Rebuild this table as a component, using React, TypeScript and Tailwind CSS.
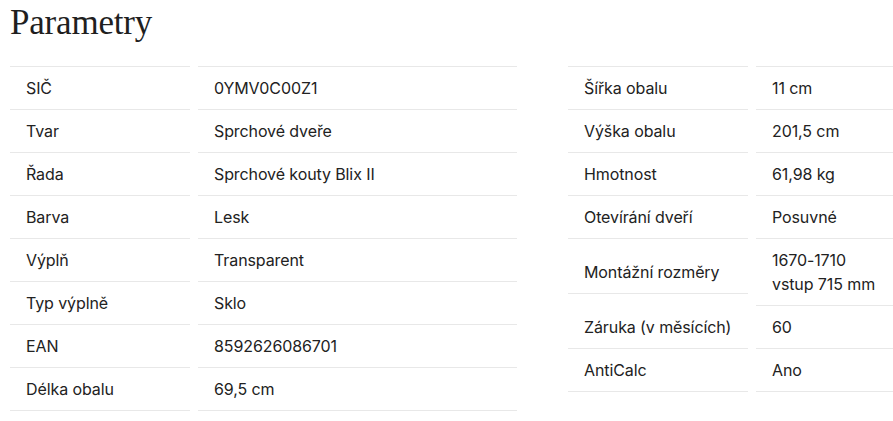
const LEFT: [string, string[]][] = [
  ['SIČ', ['0YMV0C00Z1']],
  ['Tvar', ['Sprchové dveře']],
  ['Řada', ['Sprchové kouty Blix II']],
  ['Barva', ['Lesk']],
  ['Výplň', ['Transparent']],
  ['Typ výplně', ['Sklo']],
  ['EAN', ['8592626086701']],
  ['Délka obalu', ['69,5 cm']],
]

const RIGHT: [string, string[]][] = [
  ['Šířka obalu', ['11 cm']],
  ['Výška obalu', ['201,5 cm']],
  ['Hmotnost', ['61,98 kg']],
  ['Otevírání dveří', ['Posuvné']],
  ['Montážní rozměry', ['1670-1710', 'vstup 715 mm']],
  ['Záruka (v měsících)', ['60']],
  ['AntiCalc', ['Ano']],
]

function ParamTable({ rows }: { rows: [string, string[]][] }) {
  return (
    <div className="grid w-[507px] shrink-0 grid-cols-[180px_1fr] items-center gap-x-2">
      {rows.map(([label, value], i) => (
        <div key={label} className="contents">
          <div
            className={`border-b border-[#e8e8e8] py-[9px] pl-4 leading-6 ${i === 0 ? 'border-t' : ''}`}
          >
            {label}
          </div>
          <div
            className={`border-b border-[#e8e8e8] py-[9px] pl-4 leading-6 ${i === 0 ? 'border-t' : ''}`}
          >
            {value.map((v) => (
              <div key={v}>{v}</div>
            ))}
          </div>
        </div>
      ))}
    </div>
  )
}

export default function App() {
  return (
    <div className="h-[421px] w-full overflow-hidden bg-white px-[10px] text-[#222]">
      <h2 className="m-0 pt-[3px] font-['Liberation_Serif',serif] text-[35px] leading-[40px] font-normal tracking-[-0.2px] text-[#1f1f1f]">
        Parametry
      </h2>
      <div className="mt-[23px] flex items-start gap-[51px] font-['Inter',sans-serif] text-base tracking-[-0.1px]">
        <ParamTable rows={LEFT} />
        <ParamTable rows={RIGHT} />
      </div>
    </div>
  )
}
